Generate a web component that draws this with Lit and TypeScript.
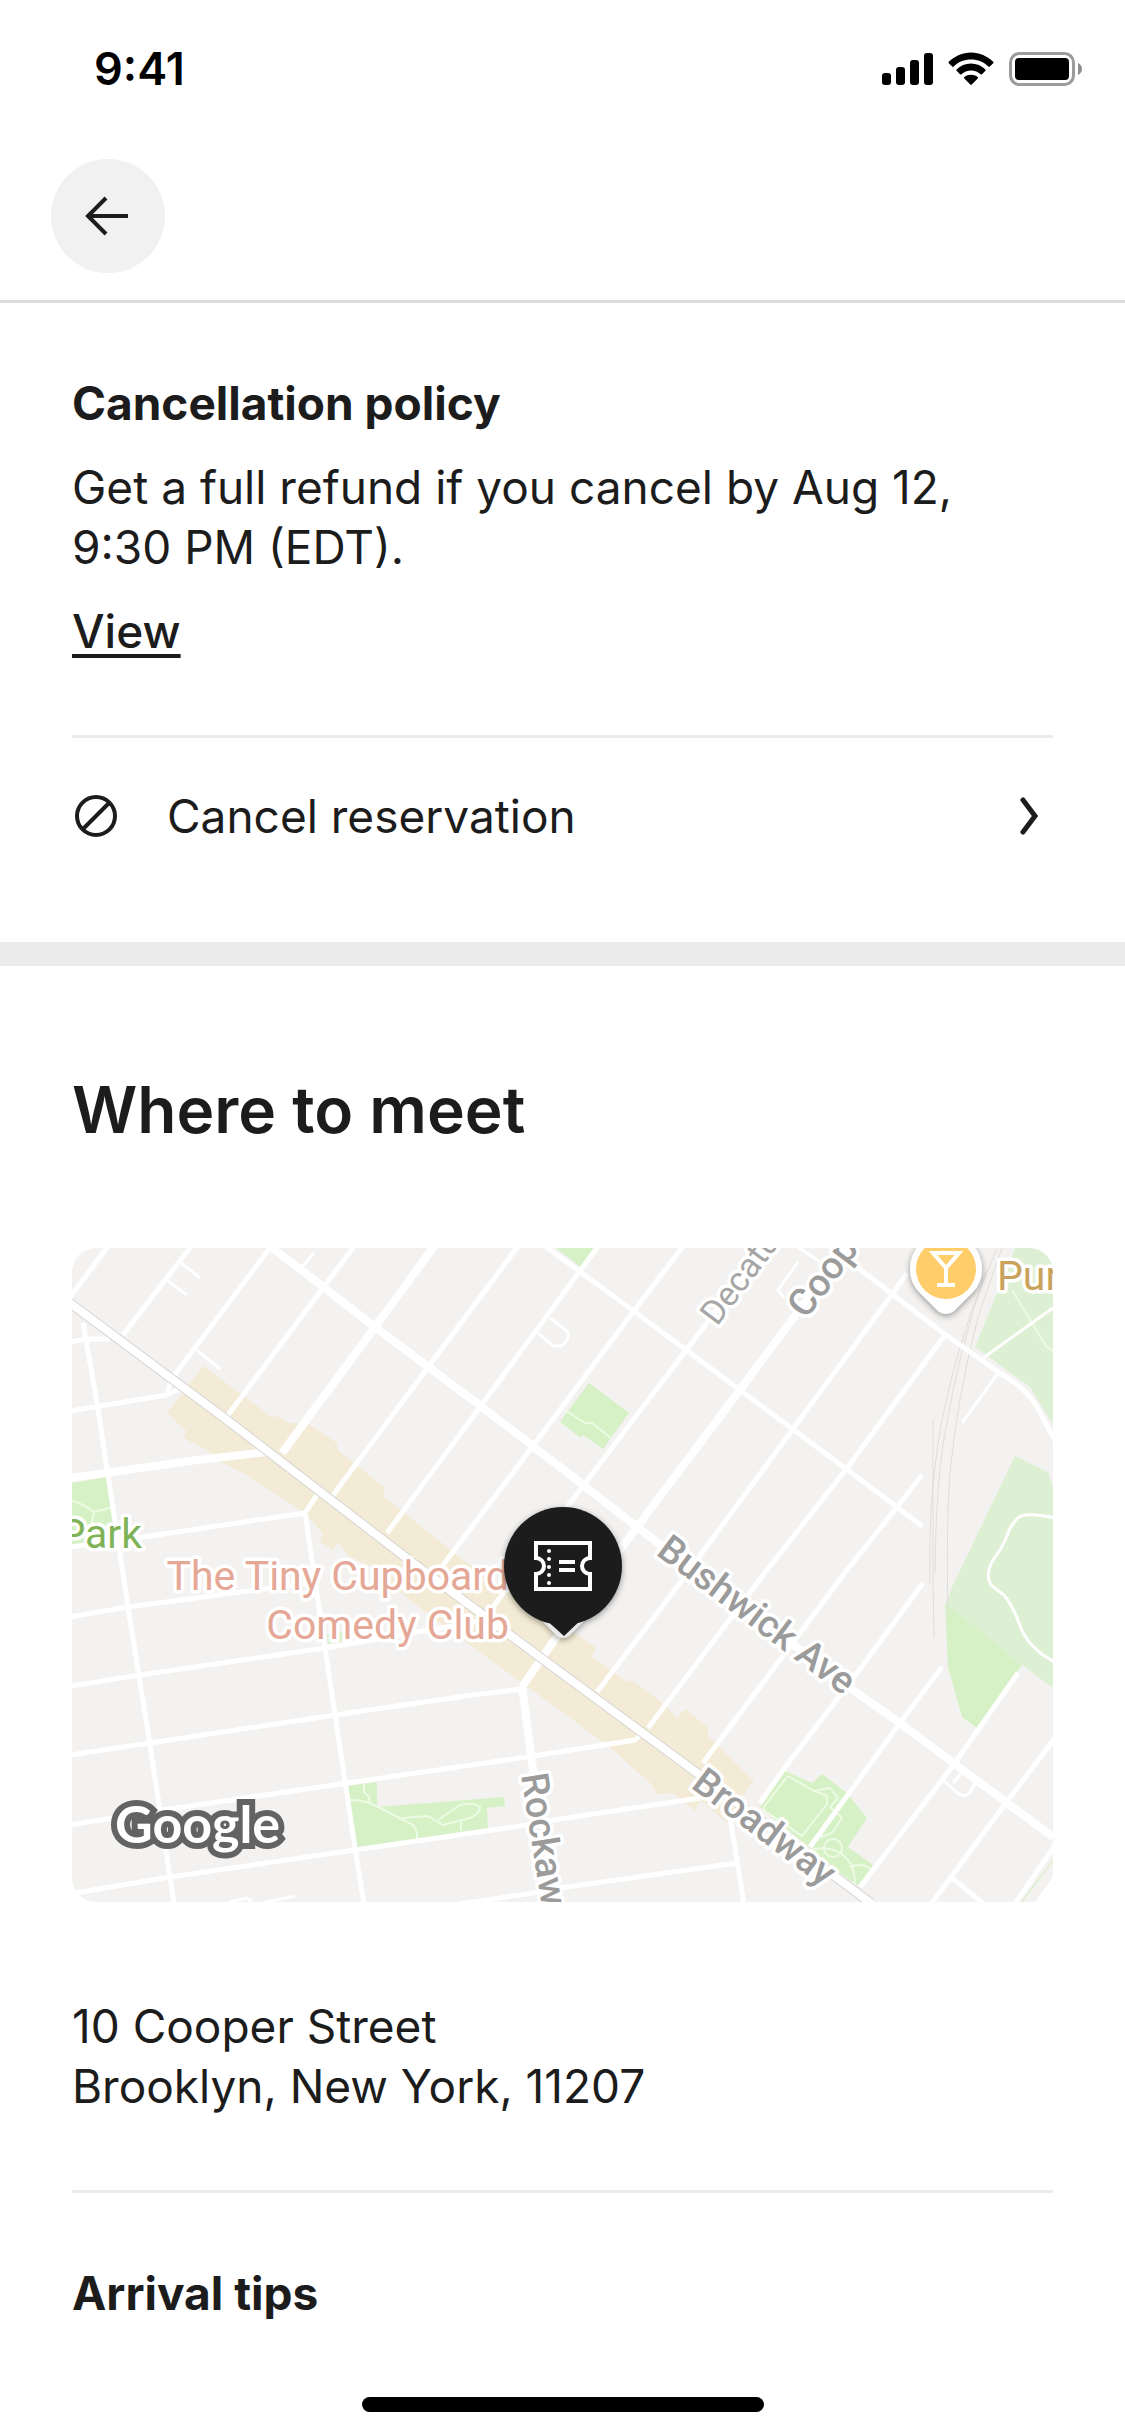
import { LitElement, html, svg, css } from 'lit';
import { customElement, property } from 'lit/decorators.js';

@customElement('status-bar')
export class StatusBar extends LitElement {
  @property() time = '';

  static styles = css`
    :host {
      display: flex;
      align-items: center;
      justify-content: space-between;
      height: 138px;
      padding: 0 42px 0 94px;
      box-sizing: border-box;
      color: #000;
    }

    .time {
      font: 600 45px/54px Inter, sans-serif;
    }

    .icons {
      display: flex;
      align-items: center;
      gap: 15px;
    }

    svg {
      display: block;
    }
  `;

  render() {
    return html`
      <span class="time">${this.time}</span>
      <div class="icons">
        <svg width="51" height="34" viewBox="0 0 51 34" aria-hidden="true">
          <rect x="0" y="21" width="9" height="12" rx="3" />
          <rect x="14" y="15" width="9" height="18" rx="3" />
          <rect x="28" y="8" width="9" height="25" rx="3" />
          <rect x="42" y="1" width="9" height="32" rx="3" />
        </svg>
        <svg width="46" height="34" viewBox="0 0 46 34" aria-hidden="true">
          <path d="M0.8 11.2a1 1 0 0 1 0-1.4C6.600 4 14.500 0.400 23 0.400s16.400 3.600 22.200 9.400a1 1 0 0 1 0 1.400l-3.400 3.400a1 1 0 0 1-1.400 0C35.900 10.200 29.800 7.600 23 7.600S10.100 10.200 5.600 14.600a1 1 0 0 1-1.400 0z" />
          <path d="M8.600 18.800a1 1 0 0 1 0-1.400C12.300 13.800 17.400 11.600 23 11.600s10.700 2.200 14.400 5.800a1 1 0 0 1 0 1.400L34 22.200a1 1 0 0 1-1.400 0C30.100 19.900 26.700 18.500 23 18.500s-7.100 1.400-9.600 3.700a1 1 0 0 1-1.400 0z" />
          <path d="M16.300 26.500a1 1 0 0 1 0-1.500C18.100 23.600 20.400 22.800 23 22.800s4.900.800 6.700 2.200a1 1 0 0 1 0 1.500L23.700 32.600a1 1 0 0 1-1.400 0z" />
        </svg>
        <svg width="74" height="34" viewBox="0 0 74 34" aria-hidden="true">
          <rect x="1.500" y="1.500" width="63" height="31" rx="9" fill="none" stroke="#9b9b9b" stroke-width="3" />
          <rect x="6" y="6" width="54" height="22" rx="4" />
          <path d="M69 11c2.500 1 4 3.400 4 6s-1.500 5-4 6z" fill="#8e8e8e" />
        </svg>
      </div>
    `;
  }
}

const ROADS = {
  wide: [
    'M198 -2L303 79L410 159L488 219L565 279L781 442L828 475L981 589',
    'M210 205L303 79L363 -3',
    'M450 439L481 394L565 279L668 142L775 -3',
    'M-2 230L118 213L195 204',
    'M450 438L461 522L486 656',
  ],
  normal: [
    'M473 -2L563 64L668 142L773 220L850 278',
    'M756 -3L785 19L871 85L928 125Q958 143 967 163L983 192',
    'M-2 49L37 -3',
    'M51 87L120 -3',
    'M95 144L101 129L197 1',
    'M156 167L283 -3',
    'M261 247L447 -3',
    'M315 285L408 159L527 -3',
    'M371 317L458 202L561 64L612 -3',
    'M421 359L498 255L631 80L694 -3',
    'M525 444L608 335L718 185L821 45L835 25',
    'M576 480L695 322L775 220L873 87',
    'M631 515L775 322L825 259L850 227',
    'M688 555L711 522L785 425L851 335',
    'M738 599L828 475L870 419',
    'M788 639L880 519L946 425',
    'M859 656L931 559L983 490',
    'M880 630L912 656',
    'M943 656L983 597',
    'M965 656L983 630',
    'M245 247L233 265L253 400L263 467L283 600L292 656',
    'M-2 94L14 91L38 91',
    'M-2 163L95 147L107 141',
    'M-2 299L71 289L233 265',
    'M11 75L25 155L56 359L78 497L102 656',
    'M-2 369L56 359L245 334',
    'M-2 438L68 427L253 400L415 372',
    'M-2 507L78 495L263 467L401 447L451 441',
    'M-2 577L91 562L275 535L455 509L563 492L573 483',
    'M-2 646L98 629L283 602L455 577L488 571L628 550',
    'M388 656L461 645L488 640L665 615',
    'M658 569L672 656',
  ],
  narrow: [
    'M108 14L128 30',
    'M95 32L115 47',
    'M125 102L148 121',
    'M230 19L242 5',
    'M466 85L481 98H489Q498 92 496 84L478 70',
    'M926 125L890 175',
    'M871 532L885 545Q893 551 899 543L904 534',
    'M881 535L890 524',
    'M760 22L726 -1M726 14L706 42L712 50',
    'M981 60L911 110',
    'M983 270Q955 264 947 269Q938 277 935 288Q930 300 921 312Q912 328 920 338L932 347Q942 360 947 375Q955 400 983 414',
    'M158 654L174 650L180 653M190 655L223 648',
  ],
  path: [
    'M0 253Q12 256 22 264L41 259M22 264L18 285',
    'M493 162L513 175H520L540 191',
    'M940 42L974 98L981 103',
    'M278 552Q292 551 308 560L341 577Q346 582 345 591',
    'M292 536V544Q300 550 297 556',
    'M330 570L356 568L371 577L398 570Q408 566 408 559Q402 554 388 557L366 572M389 573V583',
    'M718 529L742 543L755 548V556L730 588L693 563Q690 559 695 555L714 530Q716 528 718 529',
    'M742 543L758 540L766 550L758 559L770 570L760 585L745 590',
    'M738 602Q765 595 778 615Q783 622 783 639M778 619Q790 614 800 622',
  ],
};

@customElement('meeting-map')
export class MeetingMap extends LitElement {
  static styles = css`
    :host {
      display: block;
      overflow: hidden;
      border-radius: 24px;
      background-color: #f3f2f1;
    }

    svg {
      display: block;
      width: 100%;
      height: auto;
    }

    .road {
      fill: none;
      stroke: #fff;
      stroke-linejoin: round;
    }

    .road--wide {
      stroke-width: 8px;
    }

    .road--normal {
      stroke-width: 5px;
    }

    .road--narrow {
      stroke-width: 3px;
    }

    .road--path {
      stroke-width: 2px;
      stroke: #eefbe4;
    }

    .rail {
      fill: none;
      stroke: #e2dcdc;
      stroke-width: 1px;
    }

    .shops {
      fill: #f3ebd5;
    }

    .park {
      fill: #d7f1c6;
    }

    .cemetery {
      fill: #def0d3;
    }

    text {
      font-family: Roboto, sans-serif;
      font-size: 41px;
      paint-order: stroke;
      stroke: #fff;
      stroke-width: 7px;
      stroke-linejoin: round;
    }

    .street {
      font-size: 38px;
      font-weight: 500;
      fill: #9b9b9b;
    }

    .street--minor {
      font-size: 34px;
      font-weight: 400;
      fill: #a6a6a6;
    }

    .place {
      fill: #e5a796;
    }

    .place--park {
      fill: #7fb356;
    }

    .place--bar {
      fill: #c9a35c;
    }

    .logo {
      font-family: Lato, sans-serif;
      font-size: 52px;
      font-weight: 700;
      fill: #fff;
      stroke: #636363;
      stroke-width: 12px;
      stroke-linejoin: miter;
    }

    .pin-icon {
      fill: none;
      stroke: #fff;
      stroke-width: 4px;
    }
  `;

  private renderRoads(kind: keyof typeof ROADS) {
    return ROADS[kind].map(
      (d) => svg`<path class="road road--${kind}" d=${d} />`
    );
  }

  render() {
    return html`
      <svg viewBox="0 0 981 654" role="img" aria-label="Map of the meeting point">
        <defs>
          <filter id="shadow" x="-30%" y="-30%" width="160%" height="160%">
            <feDropShadow dx="0" dy="2" stdDeviation="3" flood-opacity="0.4" />
          </filter>
        </defs>

        <path class="shops" d="M131 118L201 170L205 167L216 175L235 175L265 195L266 202L313 240L311 247L325 259L391 312L508 389L524 400L520 409L555 434L560 432L593 457L605 470L613 461L636 479V487L682 533L671 547L655 575L628 552L623 563L601 545L585 546L578 535L563 522L541 502L488 462L450 435L341 355L300 319L278 309L266 295L261 302L248 294L251 285L233 265L171 225L151 215L135 202L111 190L115 184L95 165Z" />
        <path class="park" d="M0 235L35 229L44 297H0Z" />
        <path class="park" d="M484 0H523L510 20Z" />
        <path class="park" d="M517 135L557 165L531 201L511 187L509 190L488 174Z" />
        <path class="park" d="M276 538L305 534V559L432 549L433 558L415 560L416 580L285 600Z" />
        <path class="park" d="M711 522L740 535L750 526L775 545L795 570L776 599L801 617L788 639L768 625L688 559Z" />
        <path class="park" d="M255 386L270 383V393L256 396Z" />
        <path class="cemetery" d="M943 0H981V177L958 139L903 99L921 55Z" />
        <path class="cemetery" d="M943 208L976 224L981 240V440L950 417L873 359L880 339Z" />
        <path class="park" d="M873 355L950 417L905 480L890 469L876 419Z" />

        <path class="rail" d="M925 0L901 59Q870 150 863 219Q857 260 858 335" />
        <path class="rail" d="M930 0L906 69Q885 150 878 225Q874 280 876 365" />
        <path class="rail" d="M914 22Q885 110 874 180Q864 230 863 325M861 172V330L862 390" />

        ${this.renderRoads('path')} ${this.renderRoads('narrow')}
        ${this.renderRoads('normal')} ${this.renderRoads('wide')}
        <circle class="road road--path" cx="761" cy="600" r="9" />
        <path d="M948 656L983 610" fill="none" stroke="#cdeebb" stroke-width="1" />
        <path d="M-2 55L155 172L341 315L488 424L621 522L800 656" fill="none" stroke="#d6d4d2" stroke-width="10" />
        <path d="M-2 55L155 172L341 315L488 424L621 522L800 656" fill="none" stroke="#fff" stroke-width="8" />

        <text class="street street--minor" transform="translate(645 79) rotate(-53)">Decatu</text>
        <text class="street" transform="translate(734 72) rotate(-53)">Coop</text>
        <text class="street" transform="translate(583 306) rotate(37)">Bushwick Ave</text>
        <text class="street" transform="translate(618 539) rotate(37)">Broadway</text>
        <text class="street" transform="translate(449 527) rotate(81)">Rockaw</text>
        <text class="place" x="437" y="342" text-anchor="end">The Tiny Cupboard</text>
        <text class="place" x="437" y="391" text-anchor="end">Comedy Club</text>
        <text class="place place--park" x="70" y="300" text-anchor="end">Park</text>
        <text class="place place--bar" x="925" y="42">Pur</text>
        <text class="logo" x="43" y="595">Google</text>

        <g filter="url(#shadow)">
          <path d="M838 21a36 36 0 0 1 72 0q0 14-10 24l-18 18q-8 6-16 0l-18-18q-10-10-10-24z" fill="#fff" />
        </g>
        <circle cx="874" cy="21" r="30" fill="#ffcd69" />
        <path class="pin-icon" d="M861 5H887L874 20ZM874 20V37M865 37H883" />

        <g filter="url(#shadow)">
          <path d="M462 364L484 387q7 6 14 0L521 364Z" fill="#e8e8e8" />
          <circle cx="491" cy="318" r="59" fill="#1c1c1c" />
        </g>
        <path d="M472 370L492 388L511 370Z" fill="#1c1c1c" />
        <g class="pin-icon">
          <path d="M464 295H518V310A8 8 0 0 0 518 326V341H464V326A8 8 0 0 0 464 310Z" />
          <path d="M487 314H503M487 322H503" />
          <path d="M477 303V336" stroke-linecap="round" stroke-dasharray="0 8" />
        </g>
      </svg>
    `;
  }
}

@customElement('app-root')
export class AppRoot extends LitElement {
  static styles = css`
    :host {
      display: flex;
      flex-direction: column;
      min-height: 100vh;
      background-color: #fff;
      color: #1c1c1c;
      font: 400 46px/60px Inter, sans-serif;
    }

    h2,
    h3,
    p {
      margin: 0;
      font-weight: inherit;
      font-size: inherit;
    }

    svg {
      display: block;
      fill: none;
      stroke: currentColor;
    }

    button {
      border: 0;
      padding: 0;
      color: inherit;
      font: inherit;
      cursor: pointer;
    }

    .toolbar {
      display: flex;
      padding: 21px 51px 27px;
      border-bottom: 3px solid #ddd;
    }

    .back {
      display: flex;
      align-items: center;
      justify-content: center;
      width: 114px;
      height: 114px;
      border-radius: 50%;
      background-color: #f1f1f1;
    }

    .policy,
    .meet {
      display: flex;
      flex-direction: column;
      align-items: stretch;
      padding: 70px 72px 0;
    }

    h3 {
      font-weight: 700;
    }

    .policy p {
      margin-top: 24px;
    }

    .view {
      align-self: flex-start;
      margin-top: 24px;
      color: inherit;
      font-weight: 500;
      text-decoration-thickness: 4px;
      text-underline-offset: 6px;
    }

    .cancel {
      display: flex;
      align-items: center;
      gap: 50px;
      margin-top: 74px;
      padding: 48px 12px 96px 3px;
      border-top: 3px solid #ebebeb;
      background: none;
      text-align: left;
    }

    .cancel span {
      flex: 1;
    }

    .meet {
      border-top: 24px solid #ebebeb;
      padding-top: 102px;
    }

    h2 {
      font-size: 64px;
      font-weight: 600;
      line-height: 84px;
    }

    meeting-map {
      margin-top: 96px;
    }

    address {
      margin-top: 94px;
      padding-bottom: 74px;
      border-bottom: 3px solid #ebebeb;
      font-style: normal;
    }

    .meet h3 {
      margin-top: 70px;
    }

    .home-indicator {
      width: 402px;
      height: 15px;
      margin: auto auto 24px;
      border-radius: 8px;
      background-color: #000;
    }
  `;

  render() {
    return html`
      <status-bar time="9:41"></status-bar>
      <nav class="toolbar">
        <button class="back" aria-label="Back">
          <svg width="48" height="48" viewBox="0 0 48 48" stroke-width="4">
            <path d="M44 24H4M22 6L4 24L22 42" />
          </svg>
        </button>
      </nav>

      <section class="policy">
        <h3>Cancellation policy</h3>
        <p>Get a full refund if you cancel by Aug 12, 9:30&nbsp;PM (EDT).</p>
        <a class="view" href="#policy">View</a>
        <button class="cancel">
          <svg width="42" height="42" viewBox="0 0 42 42" stroke-width="4">
            <circle cx="21" cy="21" r="19" />
            <path d="M8 34L34 8" />
          </svg>
          <span>Cancel reservation</span>
          <svg width="24" height="42" viewBox="0 0 24 42" stroke-width="5" stroke-linecap="round">
            <path d="M6 5L18 21L6 37" />
          </svg>
        </button>
      </section>

      <section class="meet">
        <h2>Where to meet</h2>
        <meeting-map></meeting-map>
        <address>10 Cooper Street<br />Brooklyn, New York, 11207</address>
        <h3>Arrival tips</h3>
      </section>

      <div class="home-indicator"></div>
    `;
  }
}

declare global {
  interface HTMLElementTagNameMap {
    'app-root': AppRoot;
    'meeting-map': MeetingMap;
    'status-bar': StatusBar;
  }
}
